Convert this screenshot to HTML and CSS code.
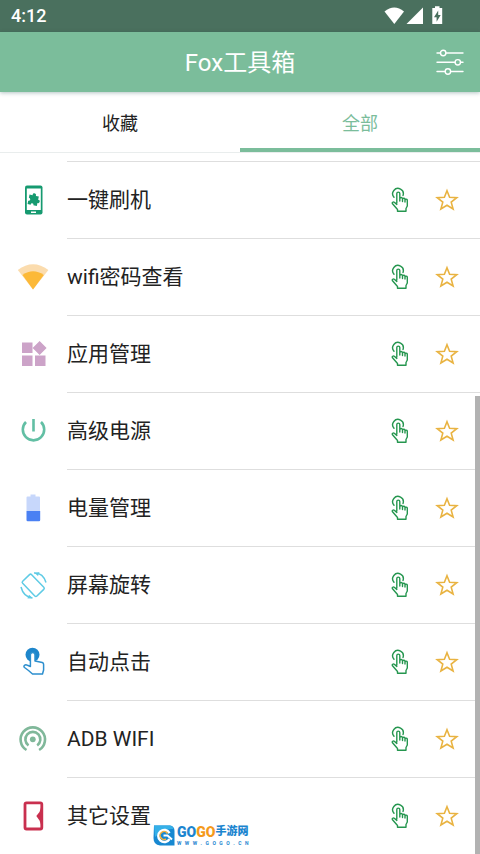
FILE: index.html
```html
<!DOCTYPE html>
<html lang="zh-CN">
<head>
<meta charset="utf-8">
<meta name="viewport" content="width=device-width, initial-scale=1">
<title>Fox工具箱</title>
<link rel="stylesheet" href="styles.css">
</head>
<body>
<svg class="defs" aria-hidden="true">
  <symbol id="tap" viewBox="0 0 18 26" fill="none" stroke="#25964f" stroke-width="1.4" stroke-linejoin="round" stroke-linecap="round">
    <path d="M3 10.3A5.300 5.300 0 1 1 12 8.500"/>
    <path d="M5.800 16V6.600a1.500 1.500 0 0 1 3 0V14M8.800 11.500a1.400 1.400 0 0 1 2.700 0V14.500M11.500 12a1.400 1.400 0 0 1 2.500 0V15M14 13a1.200 1.200 0 0 1 2.300 0V19L15 21.500V24.300H6.500V22.500L1.500 16.800C.7 15.500 2.300 14.600 3.300 15.300L5.800 17.400"/>
  </symbol>
  <symbol id="star" viewBox="0 0 24 24" fill="none" stroke="#e9b341" stroke-width="1.600" stroke-linejoin="miter">
    <path d="M12 2.700L14.600 9.200L21.800 9.600L16.200 14.100L18.100 21L12 17.200L5.900 21L7.800 14.100L2.200 9.600L9.400 9.200Z"/>
  </symbol>
</svg>

<div class="status">
  <span class="clock">4:12</span>
  <svg class="signals" viewBox="0 0 60 20" fill="#fff" aria-hidden="true">
    <path d="M.5 5.500Q10.300-2.500 20 5.500L10.300 18Z"/>
    <path d="M22.500 18L39 1.500V18Z"/>
    <path d="M48.300 2H51V.3h4.500V2h2.700V18H48.300Z"/>
    <path d="M54.200 4.500L50 11.200h2.600v4.600L56.700 9h-2.500Z" fill="#4a705e"/>
  </svg>
</div>

<header class="bar">
  <h1>Fox工具箱</h1>
  <button class="filter" aria-label="设置">
    <svg viewBox="0 0 28 28" fill="none" stroke="#fff" stroke-width="1.400" stroke-linecap="round">
      <path d="M1 5H4.500M10 5H27M1 14.300H19M24.500 14.300H27M1 23.500H9M14.800 23.500H27"/>
      <circle cx="7.200" cy="5" r="2.700"/><circle cx="21.800" cy="14.300" r="2.700"/><circle cx="11.900" cy="23.500" r="2.700"/>
    </svg>
  </button>
</header>

<nav class="tabs">
  <button class="tab">收藏</button>
  <button class="tab active">全部</button>
</nav>

<main class="content">
  <ul class="list">
    <li>
      <svg class="icon" viewBox="0 0 32 32" aria-hidden="true">
        <rect x="8" y="1.500" width="17.500" height="29" rx="2" fill="#169a70"/>
        <rect x="9.800" y="4.500" width="14" height="21.500" fill="#fff"/>
        <rect x="14" y="27.500" width="5" height="1.500" fill="#fff"/>
        <path d="M11.500 11.500h3.200c-1-2.800 3.800-3.200 3.300 0H21v3.400c2.600-.6 2.600 3.700 0 3.200V21.200h-3.500c.2-2.300-2.900-2.300-2.800 0H11.500v-3.400c2.300 0 2.300-3 0-3Z" fill="#169a70" transform="rotate(12 16.500 16)"/>
      </svg>
      <div class="row"><span class="name">一键刷机</span><button class="act" aria-label="打开"><svg class="tap"><use href="#tap"/></svg></button><button class="act" aria-label="收藏"><svg class="star"><use href="#star"/></svg></button></div>
    </li>
    <li>
      <svg class="icon" viewBox="0 0 32 32" aria-hidden="true">
        <path d="M.8 9Q16-2.500 31.400 9L16 28.500Z" fill="#fbdcae"/><path d="M5.500 14Q16 6.500 26.800 14L16 28.500Z" fill="#fcb938"/>
      </svg>
      <div class="row"><span class="name">wifi密码查看</span><button class="act" aria-label="打开"><svg class="tap"><use href="#tap"/></svg></button><button class="act" aria-label="收藏"><svg class="star"><use href="#star"/></svg></button></div>
    </li>
    <li>
      <svg class="icon" viewBox="0 0 32 32" fill="#cca3c8" aria-hidden="true">
        <path d="M5 4.500H15.500V15H5ZM5 17.500H15.500V28H5ZM18 17.500H28.500V28H18ZM22.600 3L29.600 10L22.600 17L15.600 10Z"/>
      </svg>
      <div class="row"><span class="name">应用管理</span><button class="act" aria-label="打开"><svg class="tap"><use href="#tap"/></svg></button><button class="act" aria-label="收藏"><svg class="star"><use href="#star"/></svg></button></div>
    </li>
    <li>
      <svg class="icon" viewBox="0 0 32 32" fill="none" stroke="#62bfa4" stroke-width="2.600" aria-hidden="true">
        <path d="M16.500 4V16.500M9 7A10.700 10.700 0 1 0 24 7"/>
      </svg>
      <div class="row"><span class="name">高级电源</span><button class="act" aria-label="打开"><svg class="tap"><use href="#tap"/></svg></button><button class="act" aria-label="收藏"><svg class="star"><use href="#star"/></svg></button></div>
    </li>
    <li>
      <svg class="icon" viewBox="0 0 32 32" aria-hidden="true">
        <path d="M13.500 2.500h5v2h3.500a1 1 0 0 1 1 1V19H9.500V5.500a1 1 0 0 1 1-1h3Z" fill="#c7d7fb"/>
        <path d="M9.500 19H23.200V28a1.200 1.200 0 0 1-1.200 1.200H10.700A1.200 1.200 0 0 1 9.500 28Z" fill="#4a80f3"/>
      </svg>
      <div class="row"><span class="name">电量管理</span><button class="act" aria-label="打开"><svg class="tap"><use href="#tap"/></svg></button><button class="act" aria-label="收藏"><svg class="star"><use href="#star"/></svg></button></div>
    </li>
    <li>
      <svg class="icon" viewBox="0 0 32 32" fill="none" stroke="#5fcbe5" stroke-width="1.500" aria-hidden="true">
        <rect x="10" y="6" width="12.500" height="20.500" rx="1.500" transform="rotate(-44 16.300 16.300)"/>
        <path d="M17 4Q26 3.500 29 13.500M15.500 29Q6.500 28 4 18"/>
        <path d="M17.500 4L22.500 3L21 7ZM15.500 29L10.500 29.500L12 25.800Z" fill="#5fcbe5" stroke="none"/>
      </svg>
      <div class="row"><span class="name">屏幕旋转</span><button class="act" aria-label="打开"><svg class="tap"><use href="#tap"/></svg></button><button class="act" aria-label="收藏"><svg class="star"><use href="#star"/></svg></button></div>
    </li>
    <li>
      <svg class="icon" viewBox="0 0 32 32" aria-hidden="true">
        <circle cx="15.500" cy="8.800" r="7" fill="#1e86cb"/>
        <path d="M13.400 20.500V8.800a2.300 2.300 0 0 1 4.600 0V15L25.300 16.500Q26.700 17 26.600 18.500V24L25.500 28H15.500L11.500 24.500L7.500 21.500C5.800 20 8.200 18 10.500 19.300L13.400 20.500Z" fill="#fff" stroke="#2d8fce" stroke-width="1.500" stroke-linejoin="round"/>
      </svg>
      <div class="row"><span class="name">自动点击</span><button class="act" aria-label="打开"><svg class="tap"><use href="#tap"/></svg></button><button class="act" aria-label="收藏"><svg class="star"><use href="#star"/></svg></button></div>
    </li>
    <li>
      <svg class="icon" viewBox="0 0 32 32" fill="none" stroke="#80b89a" stroke-width="2.600" aria-hidden="true">
        <path d="M9.500 27A12.200 12.200 0 1 1 22.100 27"/><path d="M11.500 22.500A7.500 7.500 0 1 1 20.200 22.500"/>
        <circle cx="15.800" cy="16.300" r="2.900" fill="#80b89a" stroke="none"/>
      </svg>
      <div class="row"><span class="name">ADB WIFI</span><button class="act" aria-label="打开"><svg class="tap"><use href="#tap"/></svg></button><button class="act" aria-label="收藏"><svg class="star"><use href="#star"/></svg></button></div>
    </li>
    <li>
      <svg class="icon" viewBox="0 0 32 32" aria-hidden="true">
        <rect x="8" y="2.800" width="16.800" height="26.200" rx="1.500" fill="#fff" stroke="#c9304f" stroke-width="2.800"/>
        <path d="M24.500 6L22.500 12L19.300 16L22.500 20.500L24.500 26Z" fill="#c9304f"/>
      </svg>
      <div class="row"><span class="name">其它设置</span><button class="act" aria-label="打开"><svg class="tap"><use href="#tap"/></svg></button><button class="act" aria-label="收藏"><svg class="star"><use href="#star"/></svg></button></div>
    </li>
  </ul>
  <div class="thumb"></div>
  <div class="mark">
    <svg viewBox="0 0 22 21" aria-hidden="true">
      <path d="M1 .5H17Q21.500 1 21.500 6V20.500H7Q.5 20 .5 13Z" fill="#1788d1"/>
      <path d="M1 .5H17Q20 1 20.500 4Q12 3 2 12Z" fill="#35b0e8"/>
      <path d="M16.500 8A6 6 0 1 0 16.500 14" fill="none" stroke="#fff" stroke-width="2.500"/>
      <path d="M14.500 8.500A4 4 0 1 0 13 14" fill="none" stroke="#f8b13c" stroke-width="1.500"/>
      <path d="M10.500 10.500H14.500L19 14.500" fill="none" stroke="#fff" stroke-width="2"/>
    </svg>
    <div class="brand">
      <div class="brand-name"><b class="go">GO</b><b class="go warm">GO</b><b class="cn">手游网</b></div>
      <div class="site"><i>W</i><i>W</i><i>W</i><i>.</i><i>G</i><i>O</i><i>G</i><i>O</i><i>.</i><i>C</i><i>N</i></div>
    </div>
  </div>
</main>
</body>
</html>
```
FILE: styles.css
```css
* { box-sizing: border-box; }

body {
  margin: 0;
  min-height: 100vh;
  display: flex;
  flex-direction: column;
  background: #fff;
  color: #222;
  font-family: Roboto, "Noto Sans CJK SC", sans-serif;
}

button {
  margin: 0;
  padding: 0;
  border: 0;
  background: none;
  font: inherit;
  color: inherit;
}

svg { display: block; }

.defs {
  position: absolute;
  width: 0;
  height: 0;
}

.status {
  display: flex;
  align-items: center;
  justify-content: space-between;
  height: 32px;
  padding: 0 36px 0 11px;
  background: #4a705e;
  color: #fff;
}

.clock {
  font-size: 18px;
  font-weight: 500;
  line-height: 32px;
}

.signals {
  width: 60px;
  height: 20px;
}

.bar {
  display: grid;
  grid-template-columns: 1fr auto 1fr;
  align-items: center;
  height: 60px;
  padding: 0 16px;
  background: #7bbd9b;
  color: #fff;
  box-shadow: 0 1px 4px rgba(0, 60, 60, 0.3);
  z-index: 1;
}

.bar h1 {
  grid-column: 2;
  margin: 0;
  padding-top: 2px;
  font-size: 24px;
  font-weight: 400;
  line-height: 36px;
}

.filter { justify-self: end; }

.filter svg {
  width: 28px;
  height: 28px;
}

.tabs {
  display: flex;
  height: 61px;
  border-bottom: 1px solid #e9eded;
}

.tab {
  flex: 1;
  border-top: 4px solid transparent;
  border-bottom: 4px solid transparent;
  font-size: 18px;
}

.tab.active {
  color: #7bbd9b;
  border-bottom-color: #7bbd9b;
}

.content {
  position: relative;
  flex: 1;
  padding-top: 8px;
}

.list {
  margin: 0;
  padding: 0;
  list-style: none;
}

.list li {
  display: flex;
  align-items: center;
  gap: 18px;
  padding-left: 17px;
}

.icon {
  flex: none;
  width: 32px;
  height: 32px;
}

.row {
  flex: 1;
  display: flex;
  align-items: center;
  gap: 26px;
  height: 77px;
  padding-right: 21px;
  border-top: 1px solid #dedede;
}

.name {
  flex: 1;
  font-size: 21px;
  line-height: 32px;
}

.tap {
  width: 18px;
  height: 26px;
}

.star {
  width: 24px;
  height: 24px;
}

.thumb {
  position: absolute;
  top: 243px;
  right: 0;
  bottom: 0;
  width: 5px;
  background: #b2b2b2;
}

.mark {
  position: absolute;
  left: 153px;
  bottom: 8px;
  display: flex;
  align-items: center;
  gap: 2px;
  color: #1c85cf;
}

.mark svg {
  width: 22px;
  height: 21px;
}

.brand-name {
  display: flex;
  align-items: center;
  height: 16px;
}

.go {
  font-family: "Liberation Sans Narrow", Roboto, sans-serif;
  font-size: 14px;
  font-weight: 900;
  line-height: 16px;
}

.warm { color: #f59a1b; }

.cn {
  font-size: 11px;
  font-weight: 900;
  line-height: 16px;
}

.site {
  display: flex;
  justify-content: space-between;
  font-size: 5px;
  font-weight: 700;
  line-height: 6px;
}

.site i { font-style: normal; }
```
